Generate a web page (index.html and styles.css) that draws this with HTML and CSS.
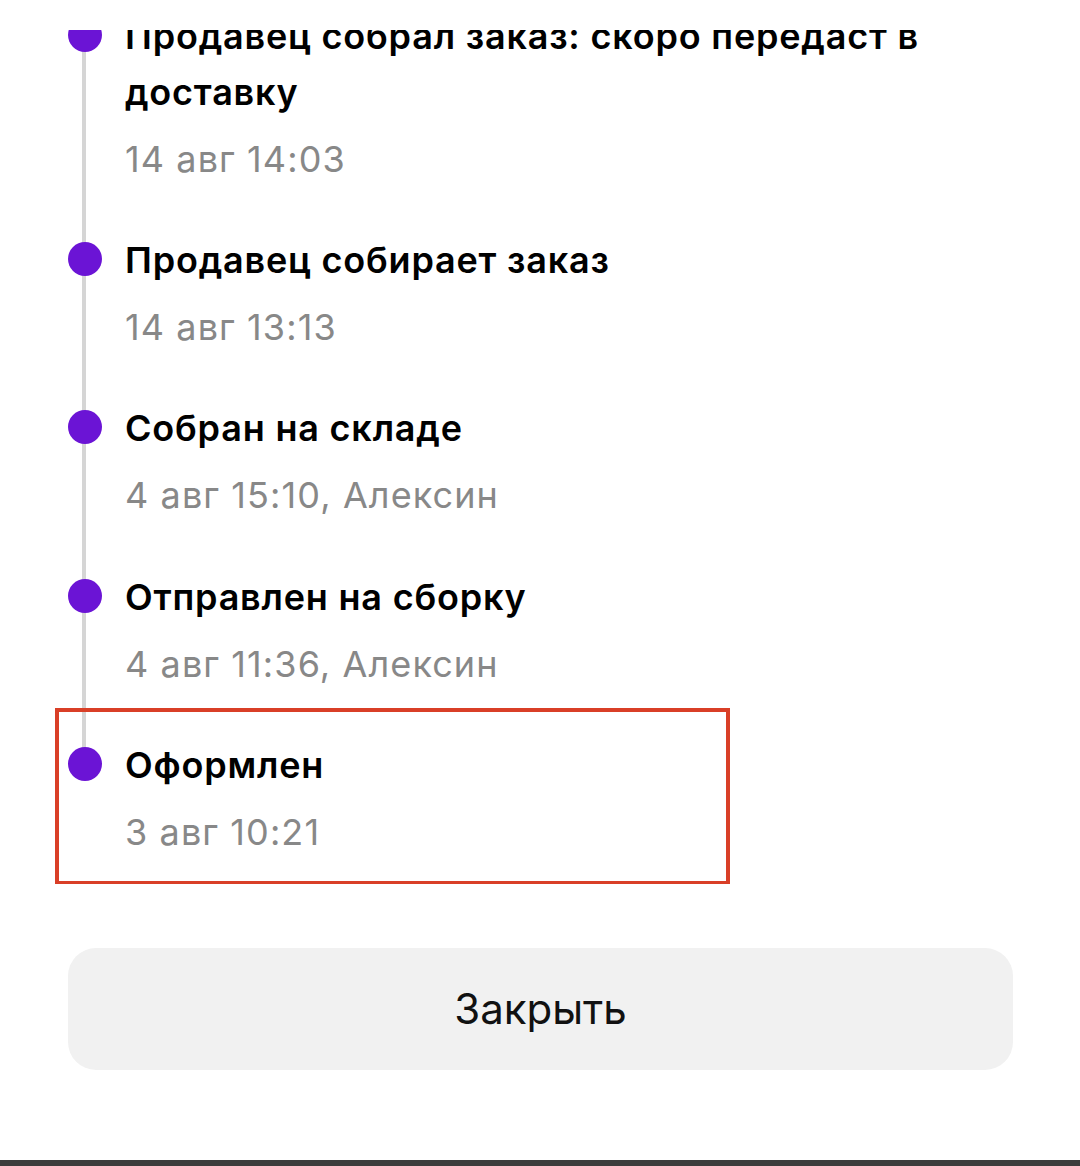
FILE: index.html
```html
<!DOCTYPE html>
<html lang="ru">
<head>
<meta charset="utf-8">
<title>История заказа</title>
<link rel="stylesheet" href="styles.css">
</head>
<body>
<div class="page">
  <div class="scroll">
    <ol class="timeline">
      <li class="step">
        <span class="dot"></span>
        <div class="body">
          <div class="title">Продавец собрал заказ: скоро передаст в доставку</div>
          <div class="date">14 авг 14:03</div>
        </div>
      </li>
      <li class="step">
        <span class="dot"></span>
        <div class="body">
          <div class="title">Продавец собирает заказ</div>
          <div class="date">14 авг 13:13</div>
        </div>
      </li>
      <li class="step">
        <span class="dot"></span>
        <div class="body">
          <div class="title">Собран на складе</div>
          <div class="date">4 авг 15:10, Алексин</div>
        </div>
      </li>
      <li class="step">
        <span class="dot"></span>
        <div class="body">
          <div class="title">Отправлен на сборку</div>
          <div class="date">4 авг 11:36, Алексин</div>
        </div>
      </li>
      <li class="step step--last">
        <span class="dot"></span>
        <div class="body">
          <div class="title">Оформлен</div>
          <div class="date">3 авг 10:21</div>
        </div>
        <div class="highlight"></div>
      </li>
    </ol>
  </div>
  <button class="close" type="button">Закрыть</button>
</div>
<div class="bar"></div>
</body>
</html>
```

FILE: styles.css
```css
* { box-sizing: border-box; }

html, body {
  margin: 0;
  padding: 0;
  background: #ffffff;
}

body {
  font-family: Inter, "Noto Sans", "Liberation Sans", sans-serif;
  color: #000000;
  width: 1080px;
  height: 1166px;
  overflow: hidden;
}

.page {
  height: 1160px;
  overflow: hidden;
}

.scroll {
  margin-top: 30px;
  padding-bottom: 30px;
  overflow: hidden;
}

.timeline {
  list-style: none;
  margin: -22px 0 0 0;
  padding: 0;
}

.step {
  position: relative;
  display: flex;
  align-items: flex-start;
  padding: 0 110px 51.2px 68px;
}

.step::before {
  content: "";
  position: absolute;
  left: 82px;
  top: 27px;
  width: 4px;
  height: 100%;
  background: #d5d5d5;
}

.step--last {
  padding-bottom: 0;
}

.step--last::before {
  display: none;
}

.dot {
  position: relative;
  z-index: 1;
  flex: none;
  width: 34px;
  height: 34px;
  margin-top: 10px;
  margin-right: 23px;
  border-radius: 50%;
  background: #6b14d5;
}

.body {
  flex: 1;
  min-width: 0;
}

.title {
  font-size: 36px;
  line-height: 56px;
  font-weight: 600;
  letter-spacing: 0.8px;
  color: #000000;
}

.date {
  margin-top: 17px;
  font-size: 36px;
  line-height: 44px;
  font-weight: 400;
  letter-spacing: 1.1px;
  color: #888888;
}

.highlight {
  position: absolute;
  left: 55px;
  top: -29px;
  width: 675px;
  height: 177px;
  border: 4px solid #d93f27;
  pointer-events: none;
}

.close {
  display: block;
  width: 945px;
  height: 122px;
  margin: 64px 0 0 68px;
  border: none;
  border-radius: 28px;
  background: #f1f1f1;
  font-family: Inter, "Noto Sans", "Liberation Sans", sans-serif;
  font-size: 42px;
  font-weight: 400;
  color: #111111;
  padding: 0;
}

.bar {
  height: 6px;
  background: #3c3c3c;
}
```
